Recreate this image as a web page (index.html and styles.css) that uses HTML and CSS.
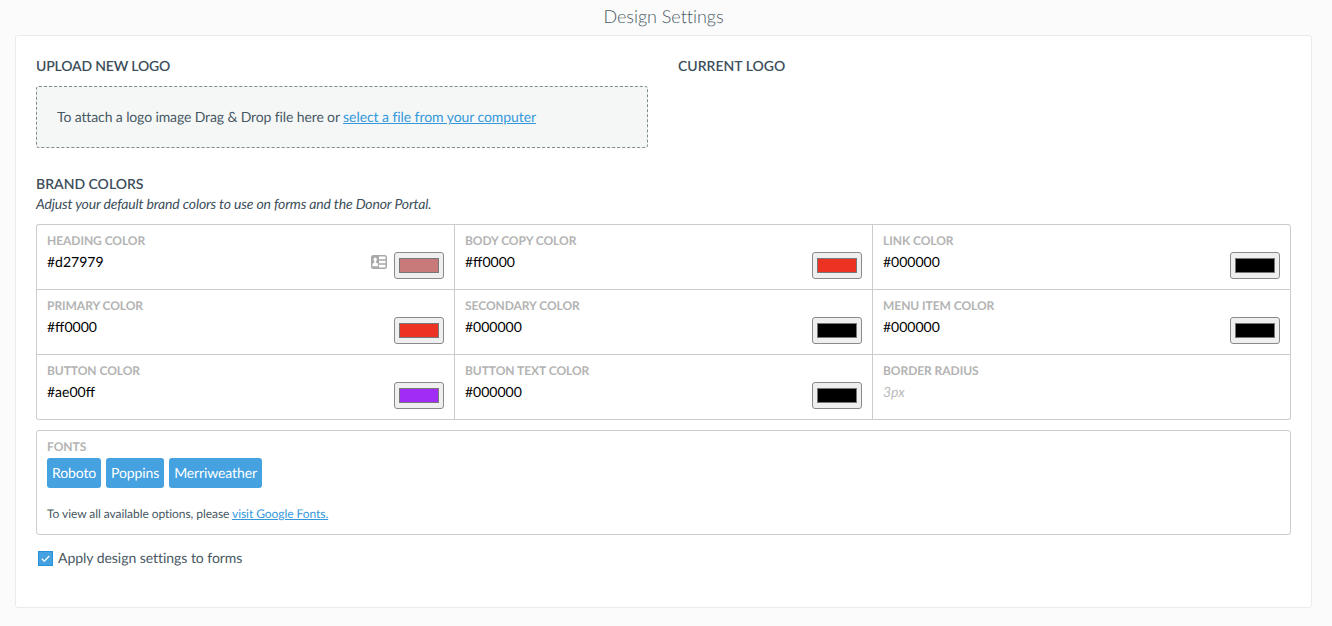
FILE: index.html
```html
<!DOCTYPE html>
<html lang="en">
<head>
    <meta charset="utf-8">
    <title>Design Settings</title>
    <link rel="stylesheet" href="styles.css">
</head>
<body>
    <h1>Design Settings</h1>

    <form class="panel" onsubmit="return false;">

        <div class="logos">
            <div class="logo-col">
                <h2 class="upload">Upload New Logo</h2>
                <div class="dropzone">To attach a logo image Drag &amp; Drop file here or <a href="#">select a file from your computer</a></div>
            </div>
            <div class="logo-col">
                <h2>Current Logo</h2>
            </div>
        </div>

        <h2>Brand Colors</h2>
        <p class="hint">Adjust your default brand colors to use on forms and the Donor Portal.</p>

        <div class="colors">
            <div class="cell">
                <div class="field"><label>Heading Color</label><span class="value">#d27979</span></div>
                <svg class="card-icon" width="16" height="14" viewBox="0 0 16 14">
                    <rect x="0.75" y="0.75" width="14.5" height="12.5" rx="1.5" fill="#fff" stroke="#a9a9a9" stroke-width="1.5"/>
                    <path d="M1 1h7v12H1z" fill="#a9a9a9"/>
                    <ellipse cx="4.2" cy="4.6" rx="1.6" ry="2.1" fill="#fff"/>
                    <path d="M3.4 5.5h1.6v2l2 1.2v2.6H1.5V8.7l1.9-1.2z" fill="#fff"/>
                    <path d="M7.5 4.9h8M7.5 9.1h8" stroke="#a9a9a9" stroke-width="1.5"/>
                </svg>
                <input type="color" value="#c87a7a">
            </div>
            <div class="cell">
                <div class="field"><label>Body Copy Color</label><span class="value">#ff0000</span></div>
                <input type="color" value="#eb3223">
            </div>
            <div class="cell">
                <div class="field"><label>Link Color</label><span class="value">#000000</span></div>
                <input type="color" value="#000000">
            </div>
            <div class="cell">
                <div class="field"><label>Primary Color</label><span class="value">#ff0000</span></div>
                <input type="color" value="#eb3223">
            </div>
            <div class="cell">
                <div class="field"><label>Secondary Color</label><span class="value">#000000</span></div>
                <input type="color" value="#000000">
            </div>
            <div class="cell">
                <div class="field"><label>Menu Item Color</label><span class="value">#000000</span></div>
                <input type="color" value="#000000">
            </div>
            <div class="cell">
                <div class="field"><label>Button Color</label><span class="value">#ae00ff</span></div>
                <input type="color" value="#a02cf6">
            </div>
            <div class="cell">
                <div class="field"><label>Button Text Color</label><span class="value">#000000</span></div>
                <input type="color" value="#000000">
            </div>
            <div class="cell">
                <div class="field"><label>Border Radius</label><span class="value placeholder">3px</span></div>
            </div>
        </div>

        <div class="fonts">
            <label>Fonts</label>
            <div class="tags">
                <span class="tag">Roboto</span>
                <span class="tag">Poppins</span>
                <span class="tag">Merriweather</span>
            </div>
            <p>To view all available options, please <a href="#">visit Google Fonts.</a></p>
        </div>

        <div class="apply">
            <svg class="check" width="15" height="15" viewBox="0 0 15 15">
                <rect x="0.5" y="0.5" width="14" height="14" fill="#45a1df" stroke="#2492da"/>
                <path d="M3.8 7.8l2.5 2.4 5-5.2" fill="none" stroke="#fff" stroke-width="1.3"/>
            </svg>
            <span>Apply design settings to forms</span>
        </div>

    </form>
</body>
</html>
```
FILE: styles.css
```css
* { box-sizing: border-box; }
body { margin: 0; background: #fbfbfb; color: #485863; font-family: Lato, sans-serif; font-size: 14px; line-height: 20px; text-rendering: geometricPrecision; }
a { color: #3498db; text-decoration: underline; }
p { margin: 0; }
h1 { margin: 0; width: 1327px; height: 35px; padding-top: 4px; font-size: 18px; font-weight: 300; line-height: 24px; letter-spacing: -0.03px; text-align: center; }
h2 { margin: 0; font-size: 14px; font-weight: 600; line-height: 20px; color: #3d4f5b; text-transform: uppercase; }
h2.upload { letter-spacing: -0.18px; }

.panel { width: 1297px; height: 573px; margin-left: 15px; padding: 20px; background: #fff; border: 1px solid #ebebeb; border-radius: 3px; }

.logos { display: flex; gap: 30px; height: 118px; }
.logo-col { width: 612px; }
.dropzone { height: 62px; margin-top: 10px; padding: 20px; background: #f5f7f7; border: 1px dashed #7f8c8d; border-radius: 3px; letter-spacing: -0.12px; }
.dropzone a { letter-spacing: -0.07px; }

.hint { font-style: italic; color: #3d4f5b; letter-spacing: -0.145px; }

.colors { display: grid; grid-template-columns: repeat(3, 418px); grid-auto-rows: 65px; width: 1255px; margin-top: 10px; border: 1px solid #ccc; border-width: 1px 0 0 1px; border-radius: 3px; }
.cell { display: flex; padding: 6px 10px; border: 1px solid #ccc; border-width: 0 1px 1px 0; }
.cell:nth-child(3) { border-top-right-radius: 3px; }
.cell:nth-child(7) { border-bottom-left-radius: 3px; }
.cell:nth-child(9) { border-bottom-right-radius: 3px; }
.cell input { width: 50px; height: 27px; margin: 21px 0 0; border: 1px solid #8a8a8a; border-radius: 3px; }
.field { flex: 1; }
label { display: block; font-size: 12px; font-weight: 700; line-height: 20px; color: #b3b3b3; letter-spacing: -0.05px; text-transform: uppercase; }
.value { display: block; line-height: 22px; color: #000; }
.placeholder { font-style: italic; color: #bbb; }
.card-icon { margin: 24px 7px 0 0; }

.fonts { width: 1255px; height: 105px; margin-top: 10px; padding: 6px 10px; border: 1px solid #ccc; border-radius: 3px; }
.tags { display: flex; gap: 5px; margin-top: 1px; }
.tag { height: 30px; padding: 0 5px; background: #45a1df; border-radius: 3px; color: #fff; line-height: 30px; letter-spacing: -0.12px; }
.fonts p { margin-top: 16px; font-size: 12px; letter-spacing: -0.06px; }

.apply { display: flex; gap: 5px; margin: 13px 0 0 2px; letter-spacing: -0.04px; }
.check { margin-top: 3px; }
```
